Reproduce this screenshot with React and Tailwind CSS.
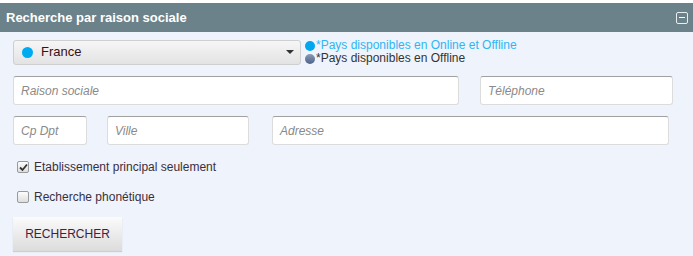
import React from "react";

const Field = ({ placeholder, className }) => (
    <div
        className={`h-[29px] bg-white border border-[#dcdcdc] border-t-[#a0a0a0] rounded-[3px] flex items-center px-[7px] text-[12px] italic text-[#8a8a8a] ${className}`}
    >
        {placeholder}
    </div>
);

const Check = ({ checked, label }) => (
    <div className="flex items-center h-[16px] text-[12px] text-[#3a2f3c]">
        <span className="w-[12px] h-[12px] ml-[4px] mr-[5px] rounded-[2px] border border-[#9a9a9a] bg-gradient-to-b from-[#fdfdfd] to-[#dedede] flex items-center justify-center">
            {checked && (
                <svg width="9" height="9" viewBox="0 0 9 9">
                    <path d="M1 4.5 L3.5 7 L8 1.5" fill="none" stroke="#333" strokeWidth="1.8" />
                </svg>
            )}
        </span>
        {label}
    </div>
);

export default function App() {
    return (
        <div className="w-[693px] h-[256px] bg-white pt-[3px] font-['Liberation_Sans',Arial,sans-serif]">
            {/* Header */}
            <div className="h-[29px] bg-[#6b828b] flex items-center justify-between pl-[6px] pr-[5px]">
                <span className="text-white font-bold text-[13px]">Recherche par raison sociale</span>
                <span className="w-[12px] h-[12px] border border-[#e8eef0] rounded-[2px] flex items-center justify-center">
                    <span className="w-[6px] h-[1px] bg-white"></span>
                </span>
            </div>

            <div className="h-[224px] bg-[#eef3fc] pl-[13px] pt-[7px]">
                {/* Country select + legend */}
                <div className="flex items-center">
                    <div className="w-[288px] h-[25px] rounded-[3px] border border-[#cfcfcf] bg-gradient-to-b from-[#f6f6f6] to-[#e3e3e3] flex items-center pl-[8px] pr-[6px]">
                        <span className="w-[11px] h-[11px] rounded-full bg-[#00aaf0]"></span>
                        <span className="ml-[8px] text-[13px] text-[#3c0f14]">France</span>
                        <span className="ml-auto w-0 h-0 border-l-[4px] border-r-[4px] border-t-[4px] border-l-transparent border-r-transparent border-t-[#333]"></span>
                    </div>
                    <div className="ml-[4px] text-[12px] leading-[13px]">
                        <div className="flex items-center text-[#2fb6f2]">
                            <span className="w-[10px] h-[10px] rounded-full bg-[#00a6ee] mr-[1px]"></span>
                            *Pays disponibles en Online et Offline
                        </div>
                        <div className="flex items-center text-[#333]">
                            <span className="w-[10px] h-[10px] rounded-full bg-gradient-to-b from-[#8a9cb6] to-[#4e6286] mr-[1px]"></span>
                            *Pays disponibles en Offline
                        </div>
                    </div>
                </div>

                {/* Inputs */}
                <div className="flex mt-[11px] gap-[21px]">
                    <Field placeholder="Raison sociale" className="w-[446px]" />
                    <Field placeholder="Téléphone" className="w-[193px]" />
                </div>
                <div className="flex mt-[11px]">
                    <Field placeholder="Cp Dpt" className="w-[74px]" />
                    <Field placeholder="Ville" className="w-[142px] ml-[20px]" />
                    <Field placeholder="Adresse" className="w-[397px] ml-[23px]" />
                </div>

                {/* Options */}
                <div className="mt-[14px]">
                    <Check checked label="Etablissement principal seulement" />
                </div>
                <div className="mt-[14px]">
                    <Check label="Recherche phonétique" />
                </div>

                <button className="mt-[12px] w-[109px] h-[34px] bg-gradient-to-b from-[#fbfbfb] to-[#dcdcdc] shadow-[0_1px_1px_rgba(0,0,0,0.15)] text-[12px] text-[#3a2540]">
                    RECHERCHER
                </button>
            </div>
        </div>
    );
}
